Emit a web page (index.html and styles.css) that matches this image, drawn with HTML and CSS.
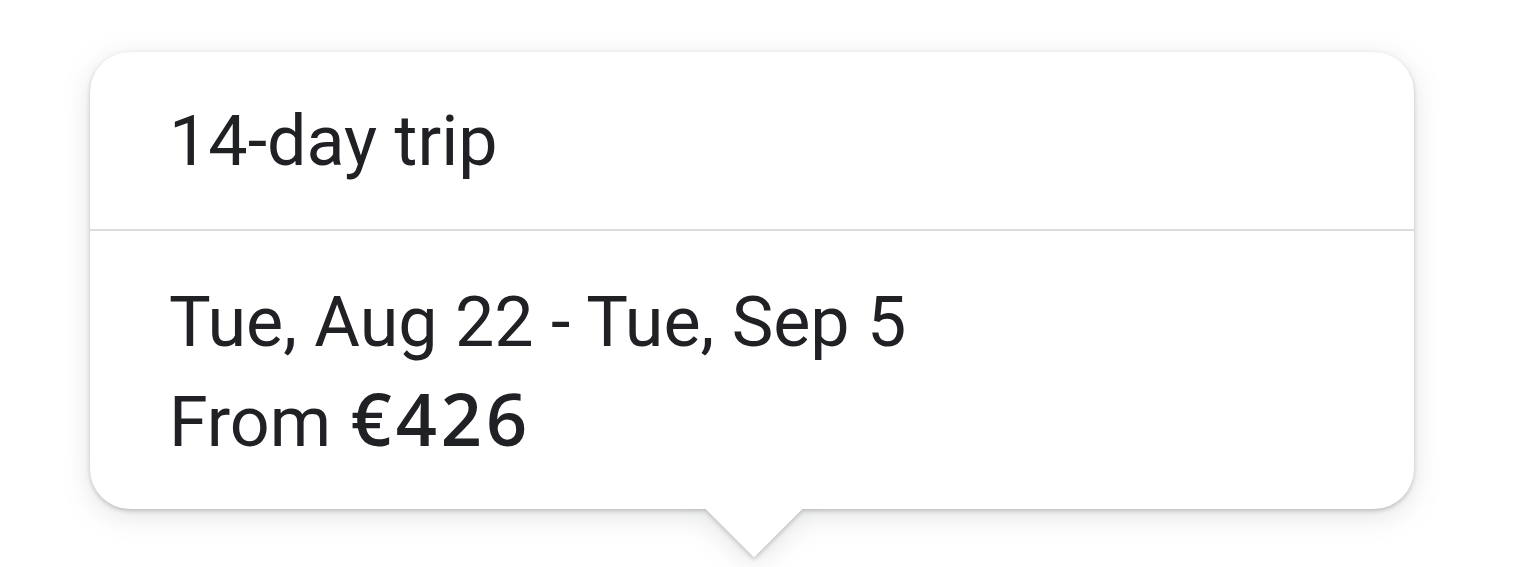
FILE: index.html
```html
<!DOCTYPE html>
<html lang="en">
<head>
<meta charset="utf-8">
<title>Trip tooltip</title>
<link rel="stylesheet" href="styles.css">
</head>
<body>
<div class="stage">
  <div class="tooltip">
    <div class="card">
      <div class="header">14-day trip</div>
      <div class="body">
        <div class="line">Tue, Aug 22 - Tue, Sep 5</div>
        <div class="line">From <span class="price">€426</span></div>
      </div>
    </div>
    <div class="arrow"></div>
  </div>
</div>
</body>
</html>
```
FILE: styles.css
```css
html, body {
  margin: 0;
  padding: 0;
  background: #ffffff;
}
body {
  width: 1527px;
  height: 567px;
  overflow: hidden;
  font-family: Roboto, "Liberation Sans", Arial, sans-serif;
  color: #202124;
}
.stage {
  padding: 52px 0 0 90px;
}
.tooltip {
  position: relative;
  width: 1324px;
  filter: drop-shadow(0 2px 2px rgba(60, 64, 67, 0.28)) drop-shadow(0 6px 14px rgba(60, 64, 67, 0.15));
}
.card {
  position: relative;
  z-index: 1;
  background: #ffffff;
  border-radius: 40px;
}
.header {
  padding: 39px 80px 38px 79px;
  font-size: 70px;
  line-height: 100px;
  border-bottom: 2px solid #dadce0;
}
.body {
  padding: 41px 80px 37px 79px;
}
.line {
  font-size: 70px;
  line-height: 100px;
  white-space: nowrap;
}
.price {
  font-family: "Open Sans", Roboto, sans-serif;
  font-weight: 600;
  font-size: 72px;
  line-height: 1;
  letter-spacing: 4px;
  margin-left: 2px;
}
.arrow {
  position: absolute;
  left: 629px;
  top: 421px;
  width: 70px;
  height: 70px;
  background: #ffffff;
  transform: rotate(45deg);
}
```
